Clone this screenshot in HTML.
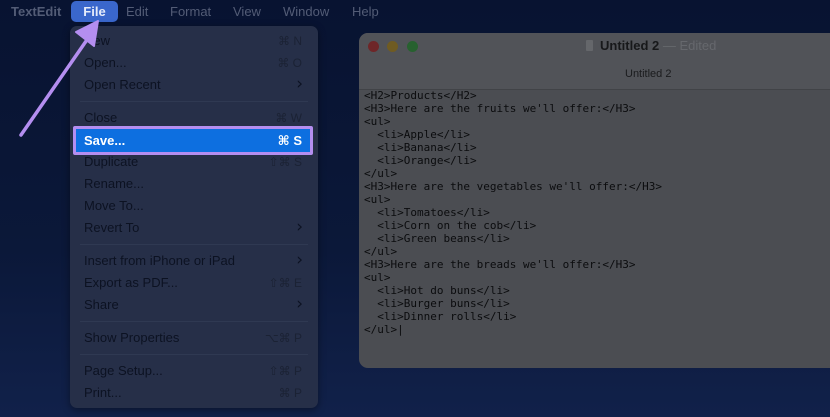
<!DOCTYPE html>
<html><head><meta charset="utf-8"><style>
*{margin:0;padding:0;box-sizing:border-box}
body{width:830px;height:417px;overflow:hidden;position:relative;background:linear-gradient(180deg,#081331 0%,#0b1839 60%,#11214a 100%);font-family:"Liberation Sans","DejaVu Sans",sans-serif}
.bar{position:absolute;left:0;top:0;width:830px;height:24px;font-size:13px;color:#535c76}
.bar span{position:absolute;top:4px}
.file{position:absolute;left:71px;top:1px;width:47px;height:21px;background:#3a67cc;border-radius:5px;color:#e6ecfa;font-weight:bold;font-size:13px;text-align:center;line-height:21px}
.menu{position:absolute;left:70px;top:26px;width:248px;height:382px;background:#262f48;border-radius:7px;box-shadow:0 2px 8px rgba(0,0,0,.4)}
.it{position:absolute;left:14px;right:14px;height:22px;line-height:22px;font-size:13px;color:#0c1222}
.it .k{position:absolute;right:2px;top:0;color:#1b2234;font-size:12px}
.it .c{position:absolute;right:1px;top:-1px;color:#0c1222;font-size:17px;font-family:"DejaVu Sans",sans-serif}
.sep{position:absolute;left:10px;right:10px;height:1px;background:#2f3952}
.save{position:absolute;left:73px;top:126px;width:240px;height:29px;border:3px solid #b48ef0;background:#0d6fe0;border-radius:2px;color:#fff;font-size:13px;font-weight:bold}
.save span{position:absolute;top:4px}
.win{position:absolute;left:359px;top:33px;width:480px;height:335px;background:#4b4d52;border-radius:9px;overflow:hidden}
.tb{position:absolute;left:0;top:0;right:0;height:57px;background:#515358;border-bottom:1px solid #414347}
.dot{position:absolute;top:8px;width:11px;height:11px;border-radius:50%}
.code{position:absolute;left:5px;top:56px;font-family:"DejaVu Sans Mono","Liberation Mono",monospace;font-size:11px;line-height:13px;color:#0b0c0e;white-space:pre}
</style></head><body>
<div class="bar">
<span style="left:11px;font-weight:bold">TextEdit</span>
<span style="left:126px">Edit</span>
<span style="left:170px">Format</span>
<span style="left:233px">View</span>
<span style="left:283px">Window</span>
<span style="left:352px">Help</span>
</div>
<div class="file">File</div>
<div class="menu">
<div class="it" style="top:4px">New<span class="k">⌘ N</span></div>
<div class="it" style="top:26px">Open...<span class="k">⌘ O</span></div>
<div class="it" style="top:48px">Open Recent<span class="c">›</span></div>
<div class="sep" style="top:75px"></div>
<div class="it" style="top:81px">Close<span class="k">⌘ W</span></div>
<div class="it" style="top:125px">Duplicate<span class="k">⇧⌘ S</span></div>
<div class="it" style="top:147px">Rename...</div>
<div class="it" style="top:169px">Move To...</div>
<div class="it" style="top:191px">Revert To<span class="c">›</span></div>
<div class="sep" style="top:218px"></div>
<div class="it" style="top:224px">Insert from iPhone or iPad<span class="c">›</span></div>
<div class="it" style="top:246px">Export as PDF...<span class="k">⇧⌘ E</span></div>
<div class="it" style="top:268px">Share<span class="c">›</span></div>
<div class="sep" style="top:295px"></div>
<div class="it" style="top:301px">Show Properties<span class="k">⌥⌘ P</span></div>
<div class="sep" style="top:328px"></div>
<div class="it" style="top:334px">Page Setup...<span class="k">⇧⌘ P</span></div>
<div class="it" style="top:356px">Print...<span class="k">⌘ P</span></div>
</div>
<div class="save"><span style="left:8px">Save...</span><span style="right:8px">⌘ S</span></div>
<svg style="position:absolute;left:0;top:0" width="830" height="417">
<line x1="21" y1="135" x2="91" y2="34" stroke="#b48ef0" stroke-width="3.5" stroke-linecap="round"/>
<polygon points="98,21 76,32 94,46" fill="#b48ef0" stroke="#b48ef0" stroke-width="2" stroke-linejoin="round"/>
</svg>
<div class="win">
<div class="tb">
<div class="dot" style="left:9px;background:#6e2628"></div>
<div class="dot" style="left:28px;background:#6f5b22"></div>
<div class="dot" style="left:48px;background:#27612f"></div>
<div style="position:absolute;left:227px;top:7px;width:7px;height:11px;background:#65676b;border-radius:1px"></div>
<div style="position:absolute;left:241px;top:5px;font-size:13px;font-weight:bold;color:#17181a">Untitled 2 <span style="font-weight:normal;color:#66686d">— Edited</span></div>
<div style="position:absolute;left:266px;top:35px;font-size:11px;color:#1a1b1d">Untitled 2</div>
</div>
<div class="code">&lt;H2&gt;Products&lt;/H2&gt;
&lt;H3&gt;Here are the fruits we'll offer:&lt;/H3&gt;
&lt;ul&gt;
  &lt;li&gt;Apple&lt;/li&gt;
  &lt;li&gt;Banana&lt;/li&gt;
  &lt;li&gt;Orange&lt;/li&gt;
&lt;/ul&gt;
&lt;H3&gt;Here are the vegetables we'll offer:&lt;/H3&gt;
&lt;ul&gt;
  &lt;li&gt;Tomatoes&lt;/li&gt;
  &lt;li&gt;Corn on the cob&lt;/li&gt;
  &lt;li&gt;Green beans&lt;/li&gt;
&lt;/ul&gt;
&lt;H3&gt;Here are the breads we'll offer:&lt;/H3&gt;
&lt;ul&gt;
  &lt;li&gt;Hot do buns&lt;/li&gt;
  &lt;li&gt;Burger buns&lt;/li&gt;
  &lt;li&gt;Dinner rolls&lt;/li&gt;
&lt;/ul&gt;|</div>
</div>
</body></html>
